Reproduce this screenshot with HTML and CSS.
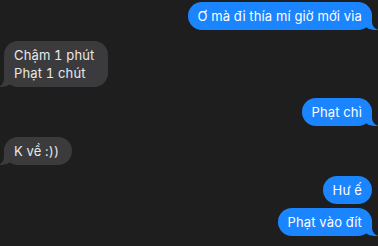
FILE: index.html
```html
<!DOCTYPE html>
<html lang="vi">
<head>
  <meta charset="UTF-8" />
  <meta name="viewport" content="width=device-width, initial-scale=1.0"/>
  <title>Messages</title>
  <link rel="stylesheet" href="styles.css">
</head>
<body>
  <div class="chat">
    <div class="msg sent tail">Ơ mà đi thía mí giờ mới vìa</div>
    <div class="msg received tail group">Chậm 1 phút<br>Phạt 1 chút</div>
    <div class="msg sent tail group">Phạt chì</div>
    <div class="msg received tail group">K về :))</div>
    <div class="msg sent group">Hư ế</div>
    <div class="msg sent tail">Phạt vào đít</div>
  </div>
</body>
</html>
```

FILE: styles.css
```css
body {
  margin: 0;
  background: #1e1e1e;
  font-family: Inter, "Noto Sans", sans-serif;
  font-size: 13px;
  letter-spacing: 0.15px;
  font-variant-numeric: tabular-nums;
}

.chat {
  display: flex;
  flex-direction: column;
  gap: 4px;
  padding: 2px 6px 0 4px;
}

.msg {
  position: relative;
  max-width: 70%;
  padding: 5px 10px;
  line-height: 18px;
  border-radius: 14px;
}

.msg.group {
  margin-top: 7px;
}

.sent {
  align-self: flex-end;
  background: #1b84ff;
  color: #fff;
}

.received {
  align-self: flex-start;
  background: #3b3b3d;
  color: #e8e8e8;
  padding-right: 13px;
}

/* bubble tails */
.tail::before,
.tail::after {
  content: "";
  position: absolute;
  bottom: 0;
  height: 16px;
}

.sent.tail::before {
  right: -6px;
  width: 16px;
  background: #1b84ff;
  border-bottom-left-radius: 12px 10px;
}

.sent.tail::after {
  right: -10px;
  width: 10px;
  background: #1e1e1e;
  border-bottom-left-radius: 8px;
}

.received.tail::before {
  left: -6px;
  width: 16px;
  background: #3b3b3d;
  border-bottom-right-radius: 12px 10px;
}

.received.tail::after {
  left: -10px;
  width: 10px;
  background: #1e1e1e;
  border-bottom-right-radius: 8px;
}
```
